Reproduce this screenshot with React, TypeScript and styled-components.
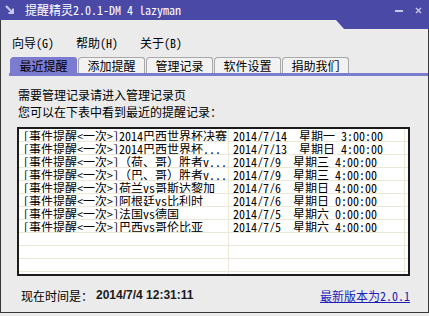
import React from 'react';
import styled, { createGlobalStyle } from 'styled-components';

const GlobalStyle = createGlobalStyle`
  html, body {
    margin: 0;
    padding: 0;
    background: #ebebeb;
  }
  body {
    font-family: "Noto Sans Mono CJK SC", "Noto Sans CJK SC", "DejaVu Sans", sans-serif;
    font-size: 12px;
    color: #000;
  }
`;

const Window = styled.div`
  width: 429px;
  height: 313px;
  box-sizing: border-box;
  border: 1px solid #383838;
  border-top: none;
  background: #ebebeb;
  display: flex;
  flex-direction: column;
`;

const TitleBar = styled.div`
  position: relative;
  height: 20px;
  margin: 0 -1px;
  background: #4a4aa6;
  display: flex;
  align-items: center;
  padding: 0 6px 0 5px;
  color: #fff;

  &::after {
    content: '';
    position: absolute;
    top: 100%;
    right: 0;
    width: 93px;
    height: 9px;
    background: #4a4aa6;
    clip-path: polygon(0 0, 100% 0, 100% 100%, 8px 100%);
  }
`;

const TitleText = styled.span`
  margin-left: 10px;
  line-height: 20px;
  letter-spacing: 0;
`;

const Controls = styled.div`
  margin-left: auto;
  display: flex;
  align-items: center;
  gap: 12px;
  padding-right: 1px;
`;

const MenuBar = styled.div`
  display: flex;
  padding: 15px 0 0 11px;
  height: 16px;
  line-height: 16px;
`;

const MenuItem = styled.span`
  width: 64px;
`;

const TabStrip = styled.div`
  display: flex;
  gap: 1px;
  margin-top: 6px;
  padding-left: 9px;
  height: 16px;
`;

const Tab = styled.div<{ $active?: boolean }>`
  width: 67px;
  box-sizing: border-box;
  text-align: center;
  line-height: 15px;
  border: 1px solid ${({ $active }) => ($active ? '#7b7bd0' : '#a8a8a8')};
  border-bottom: none;
  border-radius: 4px 3px 0 0;
  background: ${({ $active }) => ($active ? '#7b7bd0' : '#f2f2f2')};
`;

const TabBand = styled.div`
  height: 3px;
  margin-left: 8px;
  background: #7b7bd0;
`;

const Content = styled.div`
  padding: 10px 18px 0 16px;
`;

const Notice = styled.div`
  line-height: 17px;
  padding-left: 1px;
`;

const ListBox = styled.div`
  margin-top: 7px;
  width: 393px;
  height: 149px;
  box-sizing: border-box;
  border: 2px solid #1c1c1c;
  background: #fff;
  overflow: hidden;
`;

const Row = styled.div`
  display: grid;
  grid-template-columns: 209px 176px 1fr;
  height: 13px;
  box-sizing: border-box;
  border-bottom: 1px solid #ebe8d8;
`;

const Cell = styled.div`
  padding-left: 4px;
  line-height: 13px;
  white-space: pre;
  overflow: hidden;
  & + & {
    border-left: 1px solid #ebe8d8;
  }
`;

const BottomBar = styled.div`
  display: flex;
  align-items: center;
  justify-content: space-between;
  height: 16px;
  margin-top: 11px;
  padding: 0 18px 0 20px;
`;

const Clock = styled.div`
  display: flex;
  align-items: center;
  gap: 3px;
`;

const ClockValue = styled.span`
  font-family: "Liberation Sans", Arial, sans-serif;
  font-weight: bold;
  font-size: 12px;
  color: #1a1a1a;
`;

const VersionLink = styled.a`
  color: #1c1cb8;
  text-decoration: underline;
  cursor: pointer;
`;

const records = [
  ['[事件提醒<一次>]2014巴西世界杯决赛', '2014/7/14  星期一 3:00:00'],
  ['[事件提醒<一次>]2014巴西世界杯...', '2014/7/13  星期日 4:00:00'],
  ['[事件提醒<一次>]（荷、哥）胜者v...', '2014/7/9  星期三 4:00:00'],
  ['[事件提醒<一次>]（巴、哥）胜者v...', '2014/7/9  星期三 4:00:00'],
  ['[事件提醒<一次>]荷兰vs哥斯达黎加', '2014/7/6  星期日 4:00:00'],
  ['[事件提醒<一次>]阿根廷vs比利时', '2014/7/6  星期日 0:00:00'],
  ['[事件提醒<一次>]法国vs德国', '2014/7/5  星期六 0:00:00'],
  ['[事件提醒<一次>]巴西vs哥伦比亚', '2014/7/5  星期六 4:00:00'],
];

const tabs = ['最近提醒', '添加提醒', '管理记录', '软件设置', '捐助我们'];

export default function App() {
  const rows = [...records];
  while (rows.length < 12) rows.push(['', '']);

  return (
    <>
      <GlobalStyle />
      <Window>
        <TitleBar>
          <svg width="10" height="10" viewBox="0 0 10 10">
            <path d="M1 1 L8 8 M8 3.5 L8 8 L3.5 8" stroke="#c9c9ee" strokeWidth="2" fill="none" />
          </svg>
          <TitleText>提醒精灵2.0.1-DM 4 lazyman</TitleText>
          <Controls>
            <svg width="8" height="8" viewBox="0 0 8 8">
              <rect x="0" y="4" width="8" height="2" fill="#c8c8e4" />
            </svg>
            <svg width="7" height="7" viewBox="0 0 7 7">
              <path d="M1 1 L6 6 M6 1 L1 6" stroke="#c8c8e4" strokeWidth="1.3" />
            </svg>
          </Controls>
        </TitleBar>

        <MenuBar>
          <MenuItem>向导(G)</MenuItem>
          <MenuItem>帮助(H)</MenuItem>
          <MenuItem>关于(B)</MenuItem>
        </MenuBar>

        <TabStrip>
          {tabs.map((t, i) => (
            <Tab key={t} $active={i === 0}>
              {t}
            </Tab>
          ))}
        </TabStrip>
        <TabBand />

        <Content>
          <Notice>需要管理记录请进入管理记录页</Notice>
          <Notice>您可以在下表中看到最近的提醒记录：</Notice>
          <ListBox>
            {rows.map(([title, when], i) => (
              <Row key={i}>
                <Cell>{title}</Cell>
                <Cell>{when}</Cell>
                <Cell />
              </Row>
            ))}
          </ListBox>
        </Content>

        <BottomBar>
          <Clock>
            <span>现在时间是：</span>
            <ClockValue>2014/7/4 12:31:11</ClockValue>
          </Clock>
          <VersionLink>最新版本为2.0.1</VersionLink>
        </BottomBar>
      </Window>
    </>
  );
}
